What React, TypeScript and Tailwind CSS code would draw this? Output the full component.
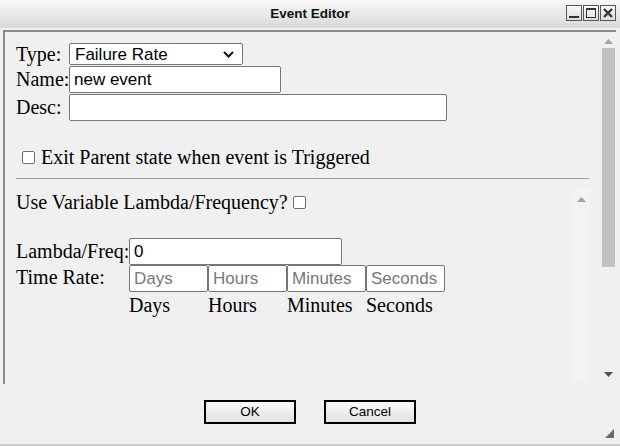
import React from "react";

const serif = "font-['Liberation_Serif','Times_New_Roman',serif]";
const sans = "font-['Liberation_Sans',Arial,sans-serif]";

function TitleButton({ kind }: { kind: "min" | "max" | "close" }) {
  return (
    <div className="flex h-[16px] w-[16px] items-center justify-center border border-[#555] bg-gradient-to-b from-[#fafafa] to-[#dedede]">
      <svg width="12" height="12" viewBox="0 0 12 12">
        {kind === "min" && <rect x="1" y="9" width="10" height="2" fill="#333" />}
        {kind === "max" && (
          <g fill="none" stroke="#333">
            <rect x="1.5" y="1.5" width="9" height="9" />
            <rect x="1" y="1" width="10" height="2" fill="#333" stroke="none" />
          </g>
        )}
        {kind === "close" && (
          <path d="M2 2 L10 10 M10 2 L2 10" stroke="#333" strokeWidth="2.4" />
        )}
      </svg>
    </div>
  );
}

function TextBox({
  value,
  placeholder,
  className,
}: {
  value?: string;
  placeholder?: string;
  className: string;
}) {
  return (
    <input
      readOnly
      value={value ?? ""}
      placeholder={placeholder}
      className={`${sans} h-[27px] rounded-[2px] border border-[#767676] bg-white px-[4px] text-[17px] text-black outline-none placeholder:text-[#777] ${className}`}
    />
  );
}

function Checkbox() {
  return <div className="h-[13px] w-[13px] shrink-0 rounded-[2px] border border-[#707070] bg-white" />;
}

export default function App() {
  return (
    <div className="flex h-[446px] w-[620px] flex-col overflow-hidden bg-[#f0f0f0] text-black">
      {/* title bar */}
      <div className="relative flex h-[28px] items-center justify-center bg-gradient-to-b from-[#f8f8f8] to-[#d9d9d9]">
        <span className={`${sans} text-[13.5px] font-bold text-[#111]`}>Event Editor</span>
        <div className="absolute right-[4px] top-[5px] flex gap-[1px]">
          <TitleButton kind="min" />
          <TitleButton kind="max" />
          <TitleButton kind="close" />
        </div>
      </div>

      {/* main panel */}
      <div className="ml-[3px] mr-[4px] mt-[2px] flex h-[354px] border-l-2 border-t-2 border-[#8c8c8c]">
        <div className={`${serif} flex flex-1 flex-col pl-[11px] pr-[12px] pt-[11px] text-[20px] leading-[23px]`}>
          <div className="flex h-[22px] items-center">
            <span className="w-[53px]">Type:</span>
            <div
              className={`${sans} flex h-[22px] w-[174px] items-center justify-between rounded-[2px] border border-[#767676] bg-white pl-[5px] pr-[8px] text-[17px]`}
            >
              <span>Failure Rate</span>
              <svg width="11" height="7" viewBox="0 0 11 7">
                <path d="M1 1 L5.5 5.5 L10 1" fill="none" stroke="#111" strokeWidth="2" />
              </svg>
            </div>
          </div>
          <div className="mt-[1px] flex items-center">
            <span className="w-[53px]">Name:</span>
            <TextBox value="new event" className="w-[212px]" />
          </div>
          <div className="mt-[1px] flex items-center">
            <span className="w-[53px]">Desc:</span>
            <TextBox className="w-[378px]" />
          </div>

          <div className="ml-[6px] mt-[25px] flex items-center gap-[6px]">
            <Checkbox />
            <span>Exit Parent state when event is Triggered</span>
          </div>

          <div className="mt-[9px] h-px bg-[#a0a0a0]" />

          {/* inner scroll area */}
          <div className="flex flex-1">
            <div className="flex flex-1 flex-col pt-[12px]">
              <div className="flex items-center gap-[5px]">
                <span>Use Variable Lambda/Frequency?</span>
                <Checkbox />
              </div>
              <div className="mt-[24px] flex items-center">
                <span className="w-[113px]">Lambda/Freq:</span>
                <TextBox value="0" className="w-[213px]" />
              </div>
              <div className="flex items-start">
                <span className="w-[113px] pt-[1px]">Time Rate:</span>
                <div className="flex flex-col">
                  <div className="flex">
                    <TextBox placeholder="Days" className="w-[79px]" />
                    <TextBox placeholder="Hours" className="w-[79px]" />
                    <TextBox placeholder="Minutes" className="w-[79px]" />
                    <TextBox placeholder="Seconds" className="w-[79px]" />
                  </div>
                  <div className="mt-[2px] grid grid-cols-[79px_79px_79px_79px]">
                    <span>Days</span>
                    <span>Hours</span>
                    <span>Minutes</span>
                    <span>Seconds</span>
                  </div>
                </div>
              </div>
            </div>
            <div className="mb-[2px] mt-[9px] flex w-[16px] flex-col items-center bg-[#f3f3f3] pt-[9px]">
              <svg width="9" height="5" viewBox="0 0 9 5">
                <path d="M0 5 L4.5 0 L9 5 Z" fill="#a3a3a3" />
              </svg>
            </div>
          </div>
        </div>

        {/* outer scrollbar */}
        <div className="flex w-[15px] flex-col items-center">
          <div className="mt-[7px] h-[6px]">
            <svg width="9" height="5" viewBox="0 0 9 5">
              <path d="M0 5 L4.5 0 L9 5 Z" fill="#a3a3a3" />
            </svg>
          </div>
          <div className="mt-[3px] h-[219px] w-[13px] bg-[#c1c1c1]" />
          <div className="flex-1" />
          <div className="mb-[7px]">
            <svg width="9" height="5" viewBox="0 0 9 5">
              <path d="M0 0 L4.5 5 L9 0 Z" fill="#505050" />
            </svg>
          </div>
        </div>
      </div>

      {/* footer */}
      <div className="relative flex flex-1 justify-center gap-[28px] border-b-2 border-[#cfcfcf] pt-[16px]">
        <button
          className={`${sans} h-[24px] w-[92px] border-2 border-black bg-gradient-to-b from-[#fafafa] to-[#e2e2e2] text-[13.5px]`}
        >
          OK
        </button>
        <button
          className={`${sans} h-[24px] w-[92px] border-2 border-black bg-gradient-to-b from-[#fafafa] to-[#e2e2e2] text-[13.5px]`}
        >
          Cancel
        </button>
        <svg className="absolute bottom-[6px] right-[6px]" width="9" height="9" viewBox="0 0 9 9">
          <path d="M9 0 L9 9 L0 9 Z" fill="#6a6a6a" />
        </svg>
      </div>
    </div>
  );
}
